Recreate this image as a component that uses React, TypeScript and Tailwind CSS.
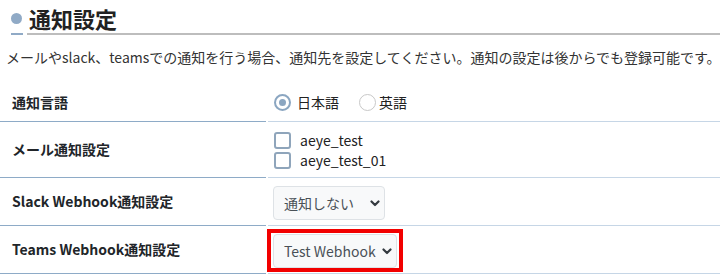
import React from "react";

const font = { fontFamily: '"Noto Sans CJK JP", "Noto Sans", sans-serif' };

function Chevron() {
  return (
    <svg width="10" height="7" viewBox="0 0 10 7" className="shrink-0">
      <path d="M1.5 1.5 L5 5 L8.5 1.5" fill="none" stroke="#343a40" strokeWidth="2.2" strokeLinecap="round" strokeLinejoin="round" />
    </svg>
  );
}

function Select({ label, width }: { label: string; width: string }) {
  return (
    <div className={`flex h-[34px] ${width} items-center justify-between rounded-[4px] border border-[#dee2e6] bg-[#f8f9fa] pl-[10px] pr-[4px] text-[14px] text-[#495057]`}>
      <span>{label}</span>
      <Chevron />
    </div>
  );
}

function Label({ children }: { children: React.ReactNode }) {
  return (
    <div className="flex items-center border-b border-[#8eabc7] pl-[12px] text-[14px] font-bold text-[#212529]">
      {children}
    </div>
  );
}

export default function App() {
  return (
    <div className="h-[278px] w-[720px] overflow-hidden bg-white text-[#333]" style={font}>
      <div className="flex h-[29px] items-center pl-[11px] pt-[4px] box-content">
        <div className="h-[11px] w-[11px] rounded-full bg-[#90aac6]" />
        <h1 className="ml-[7px] text-[22px] font-bold leading-[29px] text-[#222]">通知設定</h1>
      </div>
      <div className="flex h-[2px] items-stretch">
        <div className="ml-[11px] w-[12px] bg-[#90aac6]" />
        <div className="ml-[4px] flex-1 bg-[#bdbdbd]" />
      </div>
      <p className="mt-[12px] whitespace-nowrap pl-[6px] text-[14px] leading-[20px] text-[#333]">
        メールやslack、teamsでの通知を行う場合、通知先を設定してください。通知の設定は後からでも登録可能です。
      </p>
      <div className="mt-[17px] grid grid-cols-[266px_1fr] gap-x-[2px]">
        <Label>通知言語</Label>
        <div className="flex h-[38px] items-center border-b border-[#c6d6e6] pl-[6px] text-[14px] text-[#222]">
          <div className="flex h-[17px] w-[17px] items-center justify-center rounded-full border-2 border-[#8ba6c1] bg-white">
            <div className="h-[7px] w-[7px] rounded-full bg-[#8ba6c1]" />
          </div>
          <span className="ml-[6px]">日本語</span>
          <div className="ml-[20px] h-[17px] w-[17px] rounded-full border border-[#c8c8c8] bg-white" />
          <span className="ml-[3px]">英語</span>
        </div>

        <Label>メール通知設定</Label>
        <div className="flex flex-col border-b border-[#c6d6e6] pb-[7px] pl-[6px] pt-[8px] text-[14px] text-[#222]">
          <div className="flex h-[20px] items-center">
            <div className="h-[17px] w-[17px] rounded-[3px] border-2 border-[#8fa5bb] bg-white" />
            <span className="ml-[9px]">aeye_test</span>
          </div>
          <div className="flex h-[20px] items-center">
            <div className="h-[17px] w-[17px] rounded-[3px] border-2 border-[#8fa5bb] bg-white" />
            <span className="ml-[9px]">aeye_test_01</span>
          </div>
        </div>

        <Label>Slack Webhook通知設定</Label>
        <div className="border-b border-[#c6d6e6] pb-[5px] pl-[5px] pt-[8px]">
          <Select label="通知しない" width="w-[112px]" />
        </div>

        <Label>Teams Webhook通知設定</Label>
        <div className="border-b border-[#c6d6e6] pb-[5px] pl-[5px] pt-[8px]">
          <div className="relative w-[124px]">
            <Select label="Test Webhook" width="w-[124px]" />
            <div className="pointer-events-none absolute -bottom-[4px] -left-[6px] -right-[6px] -top-[5px] border-4 border-[#f20000]" />
          </div>
        </div>
      </div>
    </div>
  );
}
